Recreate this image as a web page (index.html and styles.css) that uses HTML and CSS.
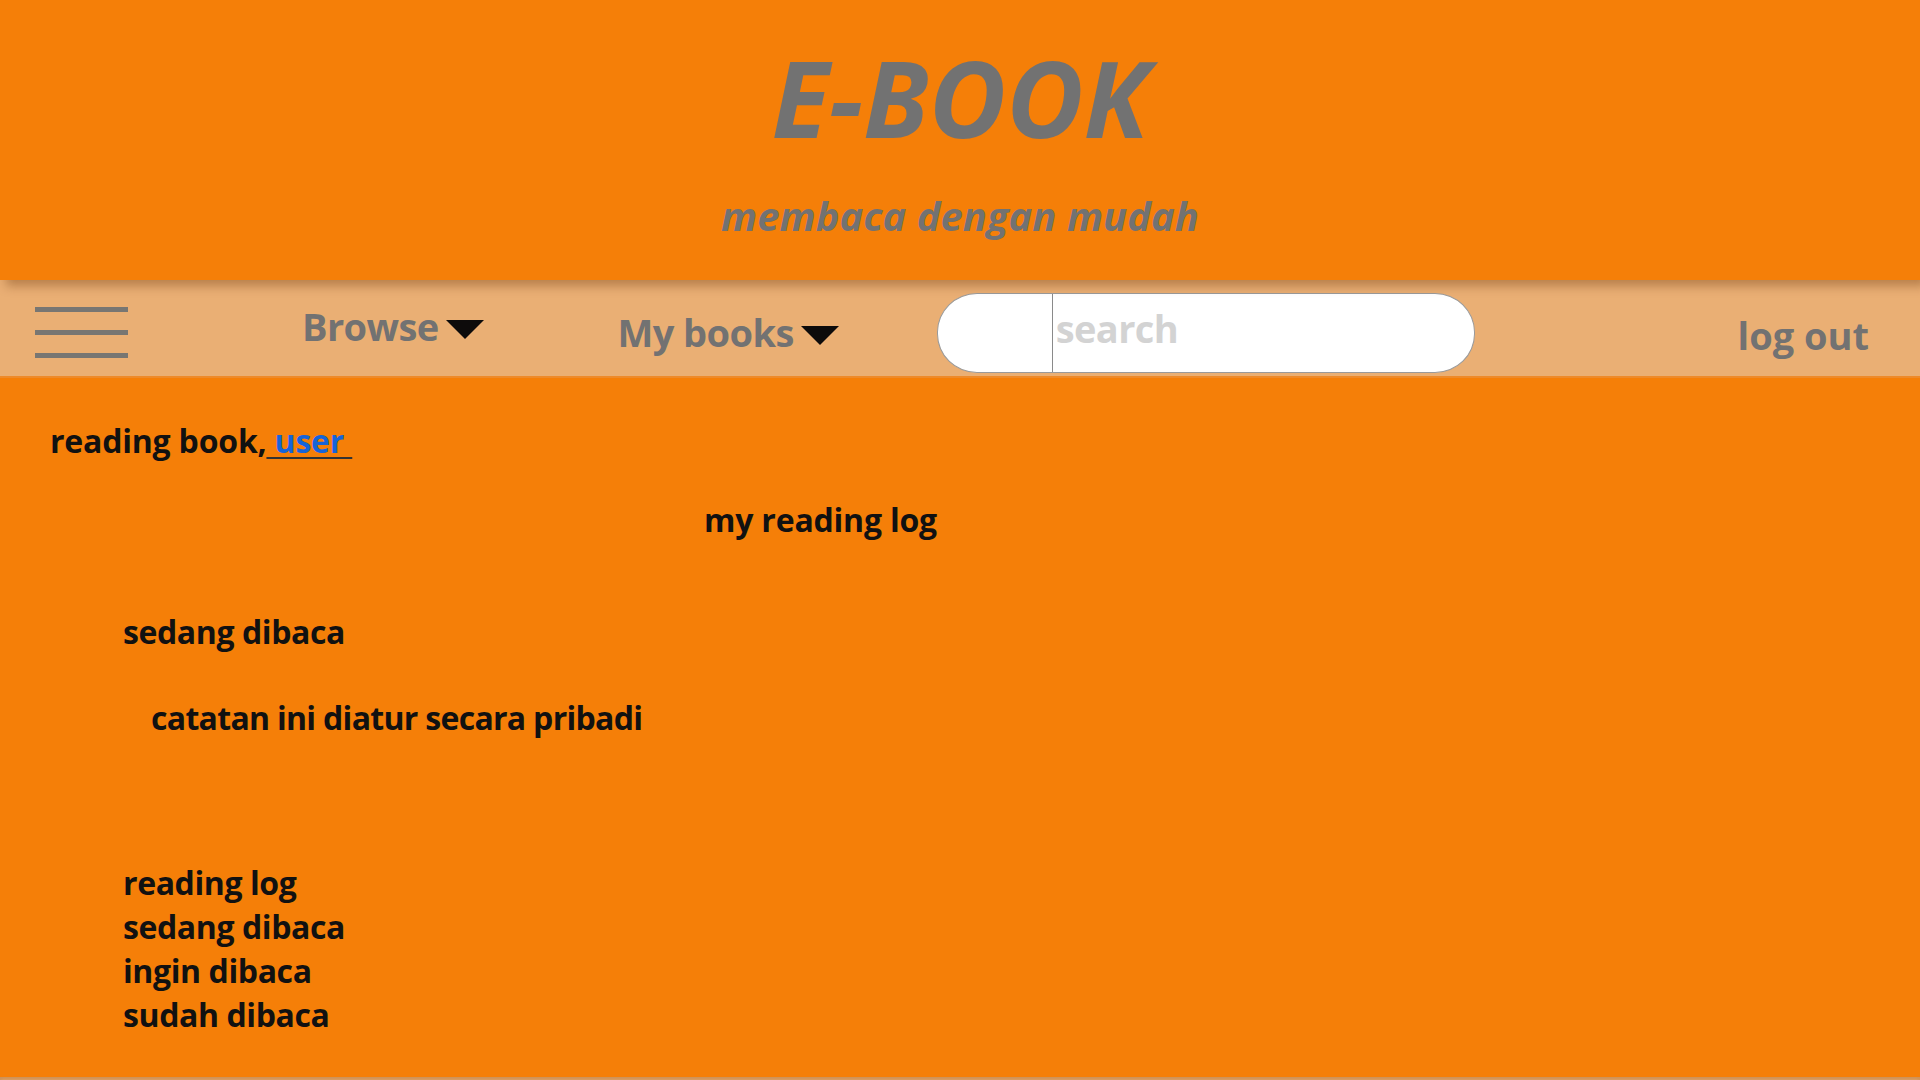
FILE: index.html
```html
<!DOCTYPE html>
<html lang="id">
<head>
<meta charset="utf-8">
<title>E-BOOK</title>
<link rel="stylesheet" href="styles.css">
</head>
<body>
<header class="site-header">
  <h1 class="brand">E-BOOK</h1>
  <p class="tagline">membaca dengan mudah</p>
</header>
<nav class="navbar">
  <div class="hamburger"><span></span><span></span><span></span></div>
  <div class="nav-item nav-browse">Browse<span class="caret"></span></div>
  <div class="nav-item nav-mybooks">My books<span class="caret"></span></div>
  <div class="search">
    <div class="search-select"></div>
    <div class="search-input">search</div>
  </div>
  <div class="nav-item nav-logout">log out</div>
</nav>
<main class="content">
  <p class="greeting">reading book,<a href="#" class="user-link"> user&nbsp;</a></p>
  <h2 class="log-title">my reading log</h2>
  <h3 class="section-title">sedang dibaca</h3>
  <p class="note">catatan ini diatur secara pribadi</p>
  <ul class="log-list">
    <li>reading log</li>
    <li>sedang dibaca</li>
    <li>ingin dibaca</li>
    <li>sudah dibaca</li>
  </ul>
</main>
<footer class="site-footer"></footer>
</body>
</html>
```
FILE: styles.css
```css
html, body {
  margin: 0;
  padding: 0;
}
body {
  background: #f57f08;
  font-family: "Open Sans", "Noto Sans", sans-serif;
  font-weight: 700;
  color: #111;
}
.site-header {
  position: relative;
  z-index: 2;
  height: 280px;
  background: #f57f08;
  text-align: center;
  box-shadow: 6px 6px 10px rgba(90, 40, 0, 0.35);
  overflow: visible;
}
.brand {
  margin: 0;
  padding-top: 30px;
  font-size: 106px;
  line-height: 134px;
  font-style: italic;
  font-weight: 700;
  color: #727272;
}
.tagline {
  margin: 0;
  padding-top: 26px;
  font-size: 40px;
  line-height: 52px;
  font-style: italic;
  font-weight: 700;
  color: #727272;
}
.navbar {
  position: relative;
  z-index: 1;
  height: 96px;
  background: #eaaf74;
  border-bottom: 2px solid #ee8a2a;
  display: flex;
  align-items: flex-start;
  color: #727272;
}
.hamburger {
  margin-left: 35px;
  margin-top: 27px;
  width: 93px;
  display: flex;
  flex-direction: column;
  gap: 18px;
}
.hamburger span {
  display: block;
  height: 5px;
  background: #787672;
}
.nav-item {
  font-size: 38px;
  line-height: 52px;
  color: #727272;
  display: flex;
  align-items: center;
  white-space: nowrap;
  letter-spacing: -0.6px;
}
.caret {
  display: inline-block;
  width: 0;
  height: 0;
  border-left: 19px solid transparent;
  border-right: 19px solid transparent;
  border-top: 19px solid #0d0b0b;
  margin-left: 7px;
  margin-top: 6px;
}
.nav-browse {
  margin-left: 174px;
  margin-top: 20px;
}
.nav-mybooks {
  margin-left: 134px;
  margin-top: 26px;
}
.search {
  margin-left: 98px;
  margin-top: 13px;
  width: 536px;
  height: 78px;
  border: 1px solid #9a9a9a;
  border-radius: 40px / 39px;
  background: #fff;
  display: flex;
  overflow: hidden;
}
.search-select {
  width: 114px;
  border-right: 1px solid #8a8a8a;
}
.search-input {
  padding-left: 3px;
  padding-top: 8px;
  font-size: 38px;
  line-height: 52px;
  color: #d3d3d3;
  letter-spacing: -0.6px;
}
.nav-logout {
  margin-left: auto;
  margin-right: 51px;
  margin-top: 29px;
  letter-spacing: 0;
}
.content {
  padding: 41px 0 0 0;
  font-size: 32px;
  line-height: 44px;
  letter-spacing: -0.2px;
  color: #111;
}
.greeting {
  margin: 0 0 0 50px;
}
.user-link {
  color: #1664d9;
  text-decoration-color: #333;
  text-decoration-thickness: 2px;
  text-underline-offset: 4px;
}
.log-title {
  margin: 35px 0 0 704px;
  font-size: 32px;
  line-height: 44px;
  font-weight: 700;
}
.section-title {
  margin: 68px 0 0 123px;
  font-size: 32px;
  line-height: 44px;
  font-weight: 700;
  letter-spacing: -0.4px;
}
.note {
  margin: 42px 0 0 151px;
  letter-spacing: -0.7px;
}
.log-list {
  list-style: none;
  margin: 121px 0 0 123px;
  padding: 0;
  letter-spacing: -0.4px;
}
.log-list li {
  line-height: 44px;
}
.site-footer {
  height: 40px;
  margin-top: 40px;
  background: #eaaf74;
  box-shadow: inset 0 3px 4px rgba(150, 80, 20, 0.35);
}
```
